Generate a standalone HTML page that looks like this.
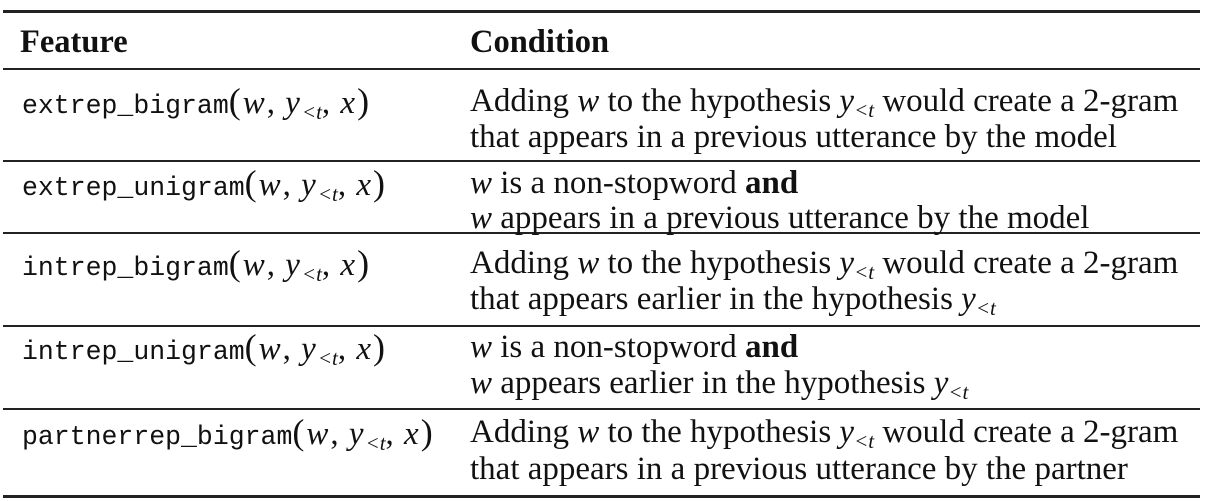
<!DOCTYPE html>
<html><head><meta charset="utf-8"><style>
body{margin:0;width:1209px;height:501px;background:#fff;position:relative;overflow:hidden;font-family:"Liberation Serif",serif;color:#111}
.r{position:absolute;left:3px;width:1197px;background:#222}
.t{position:absolute;line-height:36px;font-size:33px;white-space:nowrap}
.h{font-size:32.5px}
.m{font-family:"Liberation Mono",monospace;font-size:26.5px}
i{font-family:"Liberation Serif",serif;font-size:33px}
sub{font-size:21px;vertical-align:-6px;font-style:italic}
.p{font-size:36px;font-style:normal}
b{font-weight:bold}
.f i{margin:0 2px}
</style></head><body>
<div class="r" style="top:10px;height:3px"></div>
<div class="r" style="top:68px;height:2px"></div>
<div class="r" style="top:160px;height:2px"></div>
<div class="r" style="top:232px;height:2px"></div>
<div class="r" style="top:325px;height:2px"></div>
<div class="r" style="top:408px;height:2px"></div>
<div class="r" style="top:495px;height:3px"></div>

<div class="t h" style="left:20px;top:24px"><b>Feature</b></div>
<div class="t h" style="left:470px;top:24px"><b>Condition</b></div>

<div class="t f" style="left:22px;top:83px"><span class="m">extrep_bigram</span><span class="p">(</span><i>w</i>, <i>y</i><sub>&lt;t</sub>, <i>x</i><span class="p">)</span></div>
<div class="t" style="left:470px;top:83px">Adding <i>w</i> to the hypothesis <i>y</i><sub>&lt;t</sub> would create a 2-gram</div>
<div class="t" style="left:470px;top:119px">that appears in a previous utterance by the model</div>

<div class="t f" style="left:22px;top:165px"><span class="m">extrep_unigram</span><span class="p">(</span><i>w</i>, <i>y</i><sub>&lt;t</sub>, <i>x</i><span class="p">)</span></div>
<div class="t" style="left:470px;top:165px"><i>w</i> is a non-stopword <b>and</b></div>
<div class="t" style="left:470px;top:200px"><i>w</i> appears in a previous utterance by the model</div>

<div class="t f" style="left:22px;top:245px"><span class="m">intrep_bigram</span><span class="p">(</span><i>w</i>, <i>y</i><sub>&lt;t</sub>, <i>x</i><span class="p">)</span></div>
<div class="t" style="left:470px;top:245px">Adding <i>w</i> to the hypothesis <i>y</i><sub>&lt;t</sub> would create a 2-gram</div>
<div class="t" style="left:470px;top:281px">that appears earlier in the hypothesis <i>y</i><sub>&lt;t</sub></div>

<div class="t f" style="left:22px;top:329px"><span class="m">intrep_unigram</span><span class="p">(</span><i>w</i>, <i>y</i><sub>&lt;t</sub>, <i>x</i><span class="p">)</span></div>
<div class="t" style="left:470px;top:329px"><i>w</i> is a non-stopword <b>and</b></div>
<div class="t" style="left:470px;top:365px"><i>w</i> appears earlier in the hypothesis <i>y</i><sub>&lt;t</sub></div>

<div class="t f" style="left:22px;top:414px"><span class="m">partnerrep_bigram</span><span class="p">(</span><i>w</i>, <i>y</i><sub>&lt;t</sub>, <i>x</i><span class="p">)</span></div>
<div class="t" style="left:470px;top:414px">Adding <i>w</i> to the hypothesis <i>y</i><sub>&lt;t</sub> would create a 2-gram</div>
<div class="t" style="left:470px;top:451px">that appears in a previous utterance by the partner</div>
</body></html>
